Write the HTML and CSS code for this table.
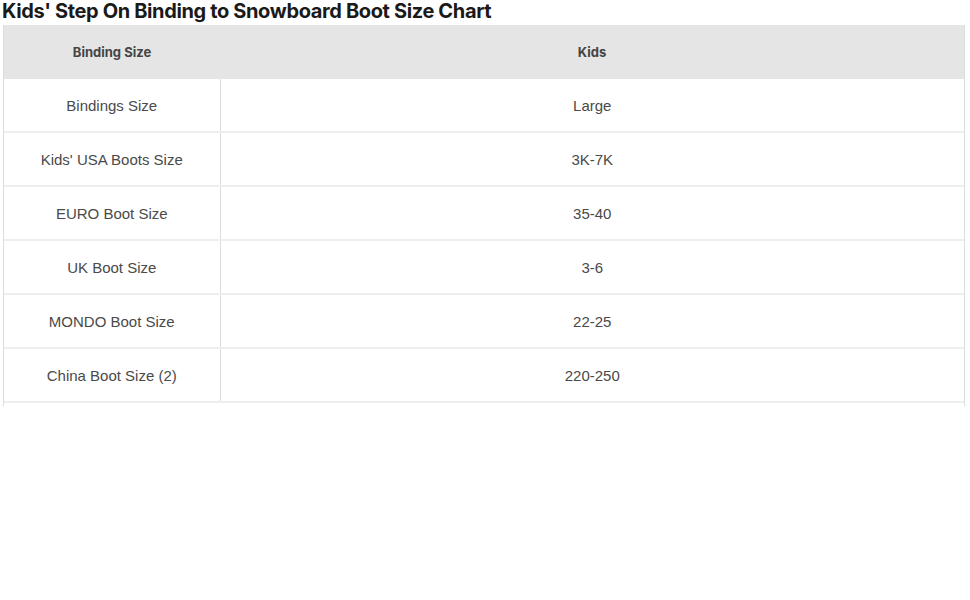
FILE: index.html
```html
<!DOCTYPE html>
<html>
<head>
<meta charset="utf-8">
<link rel="stylesheet" href="styles.css">
</head>
<body>
<h2 class="title">Kids' Step On Binding to Snowboard Boot Size Chart</h2>
<div class="wrap">
<table class="chart">
<thead>
<tr><th class="c1">Binding Size</th><th>Kids</th></tr>
</thead>
<tbody>
<tr><td class="c1">Bindings Size</td><td>Large</td></tr>
<tr><td class="c1">Kids' USA Boots Size</td><td>3K-7K</td></tr>
<tr><td class="c1">EURO Boot Size</td><td>35-40</td></tr>
<tr><td class="c1">UK Boot Size</td><td>3-6</td></tr>
<tr><td class="c1">MONDO Boot Size</td><td>22-25</td></tr>
<tr><td class="c1">China Boot Size (2)</td><td>220-250</td></tr>
</tbody>
</table>
</div>
</body>
</html>
```
FILE: styles.css
```css
html, body { margin: 0; padding: 0; background: #fff; }
body { font-family: "Liberation Sans", Arial, sans-serif; color: #444; }
.title {
  margin: 0;
  padding: 0 0 0 2px;
  height: 25px;
  line-height: 22px;
  font-family: Inter, "Liberation Sans", sans-serif;
  font-size: 20px;
  font-weight: 700;
  color: #1a1a1a;
  letter-spacing: -0.36px;
}
.wrap {
  margin-left: 3px;
  width: 962px;
  border-left: 1px solid #ddd;
  border-right: 1px solid #ddd;
  box-sizing: border-box;
  padding-bottom: 3px;
}
.chart {
  width: 100%;
  border-collapse: collapse;
  table-layout: fixed;
}
.chart th {
  background: #e5e5e5;
  height: 54px;
  padding: 0;
  font-family: Inter, "Liberation Sans", sans-serif;
  font-size: 13px;
  font-weight: 700;
  color: #444;
  text-align: center;
  vertical-align: middle;
}
.chart td {
  height: 52px;
  padding: 0;
  text-align: center;
  vertical-align: middle;
  font-size: 15px;
  color: #4a4a4a;
  border-bottom: 2px solid #eee;
}
.chart .c1 { width: 216px; }
.chart td.c1 { border-right: 1px solid #ddd; }
```
